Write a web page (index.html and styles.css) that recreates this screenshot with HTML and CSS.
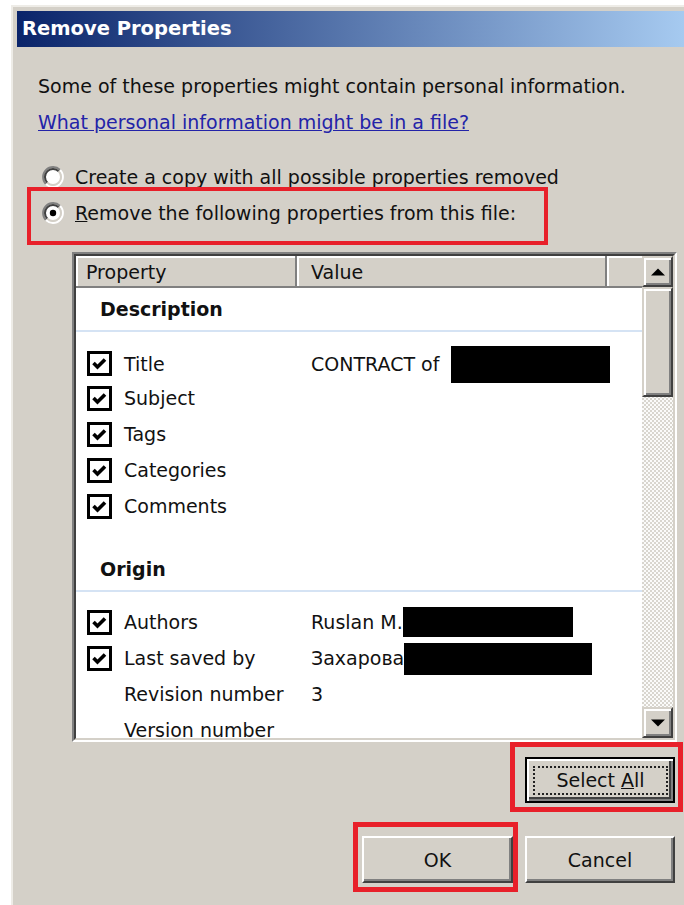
FILE: index.html
```html
<!DOCTYPE html>
<html lang="en">
<head>
<meta charset="utf-8">
<title>Remove Properties</title>
<link rel="stylesheet" href="styles.css">
</head>
<body>
<div class="window">
  <div class="titlebar">Remove Properties</div>
  <div class="content">
    <p class="intro">Some of these properties might contain personal information.<br>
      <a class="link" href="#">What personal information might be in a file?</a></p>

    <div class="radio-row">
      <svg class="radio" width="22" height="22" viewBox="0 0 22 22">
        <circle cx="11" cy="11" r="8" fill="#fff"/>
        <path d="M3.93 18.07 A10 10 0 0 1 18.07 3.93" stroke="#808080" stroke-width="2" fill="none"/>
        <path d="M18.07 3.93 A10 10 0 0 1 3.93 18.07" stroke="#fff" stroke-width="2" fill="none"/>
        <path d="M5.34 16.66 A8 8 0 0 1 16.66 5.34" stroke="#404040" stroke-width="2" fill="none"/>
        <path d="M16.66 5.34 A8 8 0 0 1 5.34 16.66" stroke="#d4d0c8" stroke-width="2" fill="none"/>
      </svg>
      <span>Create a copy with all possible properties removed</span>
    </div>
    <div class="radio-row">
      <svg class="radio" width="22" height="22" viewBox="0 0 22 22">
        <circle cx="11" cy="11" r="8" fill="#fff"/>
        <path d="M3.93 18.07 A10 10 0 0 1 18.07 3.93" stroke="#808080" stroke-width="2" fill="none"/>
        <path d="M18.07 3.93 A10 10 0 0 1 3.93 18.07" stroke="#fff" stroke-width="2" fill="none"/>
        <path d="M5.34 16.66 A8 8 0 0 1 16.66 5.34" stroke="#404040" stroke-width="2" fill="none"/>
        <path d="M16.66 5.34 A8 8 0 0 1 5.34 16.66" stroke="#d4d0c8" stroke-width="2" fill="none"/>
        <circle cx="11" cy="11" r="3.2" fill="#000"/>
      </svg>
      <span><u>R</u>emove the following properties from this file:</span>
      <span class="mark mark-radio"></span>
    </div>

    <div class="listbox">
      <div class="listbox-inner">
        <div class="list-main">
          <div class="list-header">
            <div class="hcell hcell-prop">Property</div>
            <div class="hcell hcell-value">Value</div>
            <div class="hcell hcell-fill"></div>
          </div>
          <div class="list-body">
            <div class="group-head">Description</div>
            <div class="rows">
              <div class="row"><div class="prop"><span class="check"></span>Title</div><div class="value">CONTRACT of<span class="redact redact-title"></span></div></div>
              <div class="row"><div class="prop"><span class="check"></span>Subject</div><div class="value"></div></div>
              <div class="row"><div class="prop"><span class="check"></span>Tags</div><div class="value"></div></div>
              <div class="row"><div class="prop"><span class="check"></span>Categories</div><div class="value"></div></div>
              <div class="row"><div class="prop"><span class="check"></span>Comments</div><div class="value"></div></div>
            </div>
            <div class="group-head">Origin</div>
            <div class="rows">
              <div class="row"><div class="prop"><span class="check"></span>Authors</div><div class="value">Ruslan M.<span class="redact redact-author"></span></div></div>
              <div class="row"><div class="prop"><span class="check"></span>Last saved by</div><div class="value">Захарова<span class="redact redact-saved"></span></div></div>
              <div class="row"><div class="prop"><span class="nocheck"></span>Revision number</div><div class="value">3</div></div>
              <div class="row"><div class="prop"><span class="nocheck"></span>Version number</div><div class="value"></div></div>
            </div>
          </div>
        </div>
        <div class="scrollbar">
          <div class="sb-btn"><svg width="14" height="8" viewBox="0 0 14 8"><path d="M0 7.5 L7 0.5 L14 7.5Z" fill="#000"/></svg></div>
          <div class="sb-thumb"></div>
          <div class="sb-track"></div>
          <div class="sb-btn"><svg width="14" height="8" viewBox="0 0 14 8"><path d="M0 0.5 L7 7.5 L14 0.5Z" fill="#000"/></svg></div>
        </div>
      </div>
    </div>

    <div class="btn-row btn-row-select">
      <div class="btn-wrap">
        <button class="btn btn-default"><span class="focus">Select <u>A</u>ll</span></button>
        <span class="mark mark-select"></span>
      </div>
    </div>
    <div class="btn-row btn-row-main">
      <div class="btn-wrap">
        <button class="btn btn-ok">OK</button>
        <span class="mark mark-ok"></span>
      </div>
      <div class="btn-wrap">
        <button class="btn btn-cancel">Cancel</button>
      </div>
    </div>
  </div>
</div>
</body>
</html>
```
FILE: styles.css
```css
html, body {
  margin: 0;
  padding: 0;
  background: #fff;
  height: 905px;
  overflow: hidden;
}

body {
  font-family: "DejaVu Sans", Verdana, sans-serif;
  font-size: 19px;
  color: #111;
}

.window {
  margin: 5px 0 0 11px;
  height: 900px;
  box-sizing: border-box;
  border-top: 2px solid #eeece7;
  border-left: 2px solid #eeece7;
  padding: 4px 0 0 4px;
  background: #d4d0c8;
}

.titlebar {
  height: 36px;
  line-height: 36px;
  padding-left: 5px;
  background: linear-gradient(to right, #0a246a 0%, #a6caf0 100%);
  color: #fff;
  font-weight: bold;
  font-size: 19.5px;
}

.content {
  padding: 0 7px 0 21px;
}

.intro {
  margin: 21px 0 0;
  line-height: 36px;
}

.link {
  color: #2323a8;
  text-decoration: underline;
}

.radio-row {
  position: relative;
  display: flex;
  align-items: center;
  height: 36px;
  padding-left: 4px;
  gap: 11px;
}

.radio-row:first-of-type {
  margin-top: 19px;
}

.radio {
  flex: none;
}

.mark {
  position: absolute;
  box-sizing: border-box;
  border: 4px solid #e8202a;
  pointer-events: none;
}

.mark-radio {
  left: -11px;
  top: -8px;
  width: 521px;
  height: 58px;
}

/* list view */
.listbox {
  margin: 21px 0 0 34px;
  height: 490px;
  box-sizing: border-box;
  border: 2px solid;
  border-color: #808080 #fff #fff #808080;
}

.listbox-inner {
  height: 100%;
  box-sizing: border-box;
  border: 2px solid;
  border-color: #404040 #d4d0c8 #d4d0c8 #404040;
  display: grid;
  grid-template-columns: 1fr 31px;
  background: #fff;
}

.list-main {
  overflow: hidden;
  display: flex;
  flex-direction: column;
}

.list-header {
  display: flex;
  height: 32px;
  flex: none;
  background: #d4d0c8;
}

.hcell {
  box-sizing: border-box;
  height: 32px;
  line-height: 32px;
  padding-left: 10px;
  border-right: 2px solid #808080;
  border-bottom: 2px solid #808080;
  box-shadow: inset 2px 2px #fff;
}

.hcell-prop { width: 221px; }
.hcell-value { width: 310px; padding-left: 14px; }
.hcell-fill { flex: 1; border-right: none; }

.list-body {
  flex: 1;
  overflow: hidden;
}

.group-head {
  padding: 3px 0 3px 24px;
  line-height: 36px;
  font-weight: bold;
  border-bottom: 2px solid #d5e3f4;
}

.rows {
  padding: 12px 0 24px;
}

.row {
  display: grid;
  grid-template-columns: 235px 1fr;
  height: 36px;
  align-items: center;
}

.prop {
  display: flex;
  align-items: center;
  padding-left: 11px;
  gap: 12px;
}

.check, .nocheck {
  flex: none;
  width: 25px;
  height: 25px;
  box-sizing: border-box;
}

.check {
  border: 3px solid #000;
  background: #fff url("data:image/svg+xml;utf8,<svg xmlns='http://www.w3.org/2000/svg' width='19' height='19' viewBox='0 0 19 19'><path d='M3.5 9 L7.5 13 L15 5.5' stroke='black' stroke-width='3.6' fill='none'/></svg>") center / 19px 19px no-repeat;
}

.value {
  display: flex;
  align-items: center;
  white-space: nowrap;
}

.redact {
  display: inline-block;
  background: #000;
}

.redact-title { width: 159px; height: 37px; margin: 2px 0 0 12px; }
.redact-author { width: 170px; height: 30px; }
.redact-saved { width: 188px; height: 32px; margin-top: 2px; }

/* scrollbar */
.scrollbar {
  display: flex;
  flex-direction: column;
  background: repeating-conic-gradient(#d9d6cf 0% 25%, #fbfbfa 0% 50%) 0 0 / 4px 4px;
}

.sb-btn, .sb-thumb {
  flex: none;
  box-sizing: border-box;
  background: #d4d0c8;
  border: 2px solid;
  border-color: #d4d0c8 #404040 #404040 #d4d0c8;
  box-shadow: inset 2px 2px #fff, inset -2px -2px #808080;
}

.sb-btn {
  height: 31px;
  display: flex;
  align-items: center;
  justify-content: center;
}

.sb-thumb {
  height: 110px;
}

.sb-track {
  flex: 1;
}

/* buttons */
.btn-row {
  display: flex;
  justify-content: flex-end;
  margin-right: 2px;
}

.btn-row-select {
  margin-top: 15px;
}

.btn-row-main {
  margin-top: 33px;
  gap: 12px;
}

.btn-wrap {
  position: relative;
}

.btn {
  display: flex;
  align-items: center;
  justify-content: center;
  box-sizing: border-box;
  width: 150px;
  height: 47px;
  margin: 0;
  padding: 0;
  font: inherit;
  color: #111;
  background: #d4d0c8;
  border: 2px solid;
  border-color: #fff #404040 #404040 #fff;
  box-shadow: inset -2px -2px #808080;
}

.btn-ok {
  width: 151px;
}

.btn-default {
  height: 46px;
  border-color: #000;
  box-shadow: inset 2px 2px #fff, inset -2px -2px #808080, inset -4px -4px #404040;
  align-items: stretch;
}

.focus {
  display: block;
  flex: 1;
  margin: 7px 5px 6px 6px;
  border: 2px dotted #222;
  line-height: 25px;
  text-align: center;
  white-space: nowrap;
}

.mark-select {
  left: -15px;
  top: -15px;
  right: -8px;
  bottom: -9px;
  border-width: 5px;
}

.mark-ok {
  left: -9px;
  top: -14px;
  right: -5px;
  bottom: -9px;
  border-width: 5px;
}
```
